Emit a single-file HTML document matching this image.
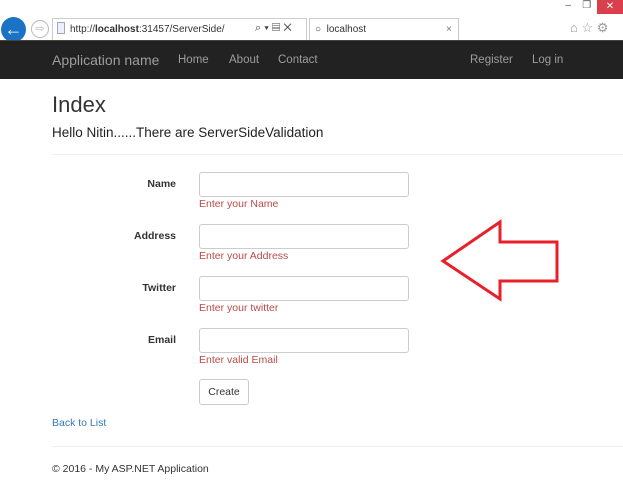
<!DOCTYPE html>
<html><head><meta charset="utf-8"><style>
*{margin:0;padding:0;box-sizing:border-box}
body{width:623px;height:486px;overflow:hidden;background:#fff;font-family:"Liberation Sans",Arial,sans-serif;position:relative;color:#333}
.a{position:absolute;white-space:nowrap}
.nav{position:absolute;left:0;top:40px;width:623px;height:39px;background:#222;border-top:1px solid #444}
.nav span{position:absolute;color:#9d9d9d;font-size:11.5px;top:13px}
.lbl{font-weight:bold;font-size:10.5px;color:#333;text-align:right;width:120px;left:56px}
.inp{position:absolute;left:199px;width:210px;height:25px;border:1px solid #ccc;border-radius:3px}
.err{color:#b94a48;font-size:10.5px;left:199px}
</style></head><body>
<div class="a" style="left:560px;top:0;width:63px;height:15px;font-size:10px;color:#555">&nbsp;&nbsp;–&nbsp;&nbsp;&nbsp;&nbsp;❐</div>
<div class="a" style="left:597px;top:0;width:26px;height:14px;background:#d9404b;color:#fff;font-size:10px;text-align:center;line-height:14px">✕</div>
<div class="a" style="left:1px;top:17px;width:25px;height:25px;border-radius:50%;background:#1a73c4;color:#fff;font-size:18px;line-height:24px;text-align:center;font-weight:bold">←</div>
<div class="a" style="left:31px;top:20px;width:18px;height:18px;border-radius:50%;border:1px solid #bbb;color:#bbb;font-size:11px;line-height:16px;text-align:center">⇨</div>
<div class="a" style="left:52px;top:18px;width:255px;height:22px;border:1px solid #ccc;border-bottom:none"></div>
<div class="a" style="left:57px;top:22px;width:8px;height:12px;border:1px solid #9ab;background:#eef"></div>
<div class="a" style="left:70px;top:24px;font-size:10px;color:#333">http://<b>localhost</b>:31457/ServerSide/</div>
<div class="a" style="left:255px;top:22px;font-size:11px;color:#444">⌕ ▾ ▤ ✕</div>
<div class="a" style="left:309px;top:18px;width:150px;height:22px;border:1px solid #ccc;border-bottom:none"></div>
<div class="a" style="left:315px;top:24px;font-size:10px;color:#333">○ &nbsp;localhost</div>
<div class="a" style="left:446px;top:24px;font-size:10px;color:#777">×</div>
<div class="a" style="left:570px;top:20px;font-size:13px;color:#999">⌂ ☆ ⚙</div>
<div class="nav">
<span style="left:52px;top:11px;font-size:14px">Application name</span>
<span style="left:178px">Home</span>
<span style="left:229px">About</span>
<span style="left:278px">Contact</span>
<span style="left:470px">Register</span>
<span style="left:532px">Log in</span>
</div>
<div class="a" style="left:52px;top:92px;font-size:22px;color:#333">Index</div>
<div class="a" style="left:52px;top:125px;font-size:13.5px;color:#222">Hello Nitin......There are ServerSideValidation</div>
<div class="a" style="left:52px;top:154px;width:571px;height:1px;background:#eee"></div>

<div class="a lbl" style="top:178px">Name</div><div class="inp" style="top:172px"></div><div class="a err" style="top:198px">Enter your Name</div>
<div class="a lbl" style="top:230px">Address</div><div class="inp" style="top:224px"></div><div class="a err" style="top:250px">Enter your Address</div>
<div class="a lbl" style="top:282px">Twitter</div><div class="inp" style="top:276px"></div><div class="a err" style="top:302px">Enter your twitter</div>
<div class="a lbl" style="top:334px">Email</div><div class="inp" style="top:328px"></div><div class="a err" style="top:354px">Enter valid Email</div>
<div class="a" style="left:199px;top:379px;width:50px;height:26px;border:1px solid #ccc;border-radius:3px;font-size:10.5px;text-align:center;line-height:24px;color:#333">Create</div>
<div class="a" style="left:52px;top:417px;font-size:10.5px;color:#337ab7">Back to List</div>
<div class="a" style="left:52px;top:446px;width:571px;height:1px;background:#eee"></div>
<div class="a" style="left:52px;top:463px;font-size:10.5px;color:#333">© 2016 - My ASP.NET Application</div>

<svg class="a" style="left:0;top:0" width="623" height="486"><polygon points="443,261 500,222 500,242 557,242 557,281 500,281 500,299" fill="none" stroke="#e8202a" stroke-width="3"/></svg>
</body></html>
